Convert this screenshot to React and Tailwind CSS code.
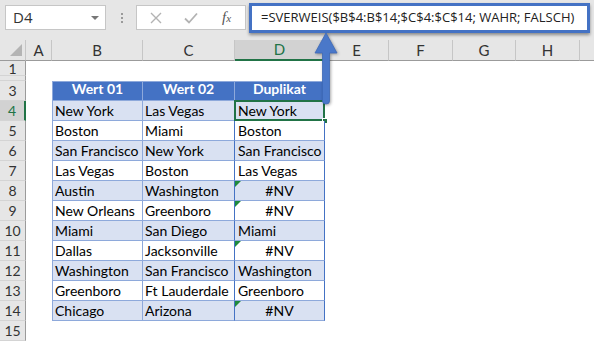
import React from "react";

const data = [
  ["New York", "Las Vegas", "New York"],
  ["Boston", "Miami", "Boston"],
  ["San Francisco", "New York", "San Francisco"],
  ["Las Vegas", "Boston", "Las Vegas"],
  ["Austin", "Washington", "#NV"],
  ["New Orleans", "Greenboro", "#NV"],
  ["Miami", "San Diego", "Miami"],
  ["Dallas", "Jacksonville", "#NV"],
  ["Washington", "San Francisco", "Washington"],
  ["Greenboro", "Ft Lauderdale", "Greenboro"],
  ["Chicago", "Arizona", "#NV"],
];

const cellFont = { fontFamily: "Lato, 'Open Sans', sans-serif" };

function RowHead({ n, h, active }) {
  return (
    <div
      className={`w-[26px] shrink-0 ${h} flex items-center justify-center border-b border-b-[#d4d4d4] text-[14px] ${
        active
          ? "bg-[#d2d2d2] text-[#217346] border-r-2 border-r-[#217346]"
          : "bg-[#e6e6e6] text-[#333] border-r border-r-[#9b9b9b]"
      }`}
      style={cellFont}
    >
      {n}
    </div>
  );
}

function Arrow() {
  return (
    <svg
      className="absolute left-[312px] top-[30px]"
      width="30"
      height="78"
      viewBox="0 0 30 78"
      style={{ filter: "drop-shadow(1px 1px 1.5px rgba(0,0,0,0.35))" }}
    >
      <path
        d="M14 3 L25 23 L17.5 23 L17.5 71 Q17.5 74 14 74 Q10.5 74 10.5 71 L10.5 23 L3 23 Z"
        fill="#4a78c9"
        stroke="#3c68b8"
        strokeWidth="0.8"
        strokeLinejoin="round"
      />
    </svg>
  );
}

export default function App() {
  return (
    <div className="relative w-[594px] h-[341px] overflow-hidden bg-white select-none">
      {/* Formula toolbar */}
      <div className="h-[40px] bg-[#e6e6e6] flex items-start">
        <div className="ml-[5px] mt-[5px] w-[101px] h-[25px] bg-white border border-[#c6c6c6] flex items-center justify-between pl-[7px] pr-[6px]">
          <span className="text-[15px] text-[#333]" style={{ fontFamily: "'Open Sans', sans-serif" }}>
            D4
          </span>
          <span className="w-0 h-0 border-l-[4px] border-l-transparent border-r-[4px] border-r-transparent border-t-[4px] border-t-[#777]" />
        </div>
        <div className="ml-[15px] mt-[13px] flex flex-col gap-[2px]">
          <span className="w-[2px] h-[2px] bg-[#9a9a9a]" />
          <span className="w-[2px] h-[2px] bg-[#9a9a9a]" />
          <span className="w-[2px] h-[2px] bg-[#9a9a9a]" />
        </div>
        <div className="ml-[13px] mt-[5px] w-[110px] h-[25px] bg-white border border-[#c6c6c6] flex items-center">
          <svg width="12" height="12" viewBox="0 0 12 12" className="ml-[13px]">
            <path d="M1 1 L11 11 M11 1 L1 11" stroke="#b3b3b3" strokeWidth="1.4" />
          </svg>
          <svg width="14" height="12" viewBox="0 0 14 12" className="ml-[22px]">
            <path d="M1 6.5 L5 10.5 L13 1.5" stroke="#b3b3b3" strokeWidth="1.8" fill="none" />
          </svg>
          <span
            className="ml-[24px] text-[15px] italic text-[#555]"
            style={{ fontFamily: "'Liberation Serif', serif" }}
          >
            f<span className="text-[11px]">x</span>
          </span>
        </div>
        <div className="ml-[3px] mt-[3px] w-[341px] h-[30px] bg-white border-[3px] border-[#4472c4] shadow-[0_2px_3px_rgba(0,0,0,0.4)] flex items-center pl-[9px] overflow-hidden">
          <span className="text-[13px] text-[#222] whitespace-nowrap" style={{ fontFamily: "'Open Sans', sans-serif" }}>
            =SVERWEIS($B$4:B$14;$C$4:$C$14; WAHR; FALSCH)
          </span>
        </div>
      </div>

      {/* Column headers */}
      <div className="h-[21px] flex bg-[#e6e6e6] text-[15px] text-[#333]" style={cellFont}>
        <div className="w-[26px] shrink-0 relative border-r border-r-[#c6c6c6] border-b border-b-[#9b9b9b]">
          <svg className="absolute left-0 top-0" width="26" height="21">
            <polygon points="22,4 22,16 10,16" fill="#b4b4b4" />
          </svg>
        </div>
        <div className="w-[26px] shrink-0 flex items-center justify-center border-r border-r-[#c6c6c6] border-b border-b-[#9b9b9b]">A</div>
        <div className="w-[91px] shrink-0 flex items-center justify-center border-r border-r-[#c6c6c6] border-b border-b-[#9b9b9b]">B</div>
        <div className="w-[92px] shrink-0 flex items-center justify-center border-r border-r-[#c6c6c6] border-b border-b-[#9b9b9b]">C</div>
        <div className="w-[90px] shrink-0 flex items-center justify-center border-r border-r-[#c6c6c6] border-b-2 border-b-[#217346] bg-[#d2d2d2] text-[#217346]">D</div>
        <div className="w-[64px] shrink-0 flex items-center justify-center border-r border-r-[#c6c6c6] border-b border-b-[#9b9b9b]">E</div>
        <div className="w-[64px] shrink-0 flex items-center justify-center border-r border-r-[#c6c6c6] border-b border-b-[#9b9b9b]">F</div>
        <div className="w-[63px] shrink-0 flex items-center justify-center border-r border-r-[#c6c6c6] border-b border-b-[#9b9b9b]">G</div>
        <div className="w-[64px] shrink-0 flex items-center justify-center border-r border-r-[#c6c6c6] border-b border-b-[#9b9b9b]">H</div>
        <div className="flex-1 border-b border-b-[#9b9b9b]" />
      </div>

      {/* Row 1 */}
      <div className="h-[15px] flex">
        <RowHead n="1" h="h-[15px]" />
      </div>
      {/* Row 2 (narrow) */}
      <div className="h-[5px] flex">
        <RowHead n="" h="h-[5px]" />
      </div>
      {/* Row 3 header */}
      <div className="h-[20px] flex" style={cellFont}>
        <RowHead n="3" h="h-[20px]" />
        <div className="w-[26px] shrink-0" />
        {["Wert 01", "Wert 02", "Duplikat"].map((t, i) => (
          <div
            key={t}
            className={`${i === 0 ? "w-[91px] border-l" : i === 1 ? "w-[92px]" : "w-[90px]"} shrink-0 h-[20px] bg-[#4472c4] border-t border-r border-b border-[#8ea9db] flex items-end pb-[1px] justify-center text-white font-bold text-[14px]`}
          >
            {t}
          </div>
        ))}
      </div>

      {/* Data rows */}
      {data.map((r, idx) => {
        const rowNum = idx + 4;
        const shaded = idx % 2 === 0;
        const bg = shaded ? "bg-[#d9e1f2]" : "bg-white";
        const isNV = r[2] === "#NV";
        return (
          <div key={rowNum} className="h-[20px] flex" style={cellFont}>
            <RowHead n={String(rowNum)} h="h-[20px]" active={rowNum === 4} />
            <div className="w-[26px] shrink-0" />
            <div className={`w-[91px] shrink-0 h-[20px] ${bg} border-l border-r border-b border-[#8ea9db] pl-[2px] flex items-end pb-[1px] text-[14px] leading-[17px] text-black whitespace-nowrap`}>
              {r[0]}
            </div>
            <div className={`w-[92px] shrink-0 h-[20px] ${bg} border-r border-r-[#4472c4] border-b border-b-[#8ea9db] pl-[2px] flex items-end pb-[1px] text-[14px] leading-[17px] text-black whitespace-nowrap`}>
              {r[1]}
            </div>
            <div className={`relative w-[90px] shrink-0 h-[20px] ${bg} border-r border-r-[#4472c4] border-b border-b-[#8ea9db] ${isNV ? "justify-center" : "pl-[3px]"} flex items-end pb-[1px] text-[14px] leading-[17px] text-black whitespace-nowrap`}>
              {isNV && (
                <span className="absolute left-0 top-0 w-0 h-0 border-t-[6px] border-t-[#1f8a3c] border-r-[6px] border-r-transparent" />
              )}
              {r[2]}
              {rowNum === 4 && (
                <>
                  <span className="absolute -left-[1px] -top-[1px] -right-[1px] -bottom-[1px] border-2 border-[#217346]" />
                  <span className="absolute -right-[4px] -bottom-[4px] w-[6px] h-[6px] bg-[#217346] border border-white" />
                </>
              )}
            </div>
          </div>
        );
      })}

      {/* Row 15 */}
      <div className="h-[20px] flex">
        <RowHead n="15" h="h-[20px]" />
      </div>

      <Arrow />
    </div>
  );
}
